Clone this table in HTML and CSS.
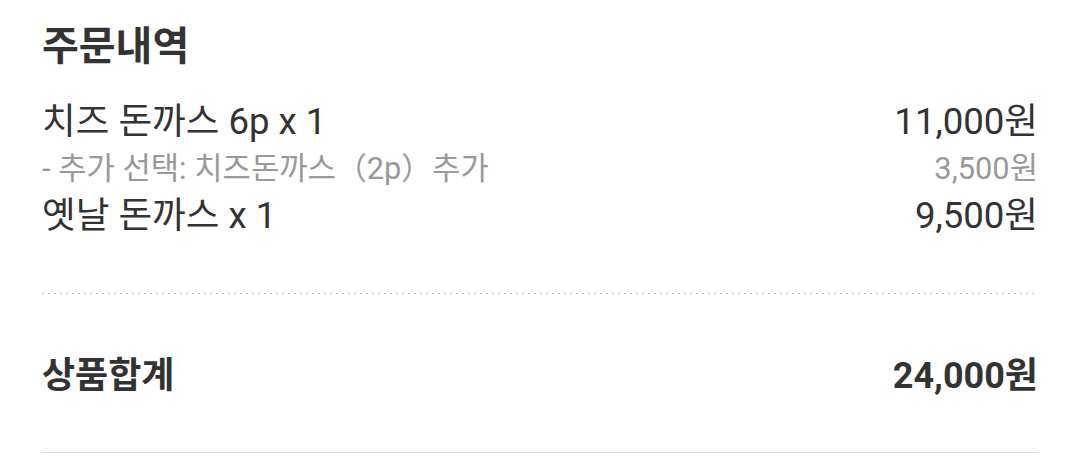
FILE: index.html
```html
<!DOCTYPE html>
<html lang="ko">
<head>
<meta charset="utf-8">
<link rel="stylesheet" href="styles.css">
</head>
<body>
<section class="order">
  <h2 class="order-title">주문내역</h2>
  <ul class="order-list">
    <li class="order-row">
      <span class="order-name">치즈 돈까스 6p x 1</span>
      <span class="order-price">11,000원</span>
    </li>
    <li class="order-row order-row--option">
      <span class="order-name">- 추가 선택: 치즈돈까스（2p）추가</span>
      <span class="order-price">3,500원</span>
    </li>
    <li class="order-row">
      <span class="order-name">옛날 돈까스 x 1</span>
      <span class="order-price">9,500원</span>
    </li>
  </ul>
  <div class="divider-dotted"></div>
  <div class="order-total">
    <span class="total-label">상품합계</span>
    <span class="total-price">24,000원</span>
  </div>
  <div class="divider-solid"></div>
</section>
</body>
</html>
```
FILE: styles.css
```css
html, body {
  margin: 0;
  padding: 0;
  background: #ffffff;
}
body {
  font-family: Roboto, "Noto Sans CJK KR", sans-serif;
  color: #333333;
}
.order {
  padding: 0 42px;
}
.order-title {
  margin: 0;
  padding-top: 22px;
  height: 50px;
  line-height: 50px;
  font-size: 40px;
  font-weight: 700;
  color: #333333;
}
.order-list {
  list-style: none;
  margin: 26px 0 0;
  padding: 0;
}
.order-row {
  display: flex;
  justify-content: space-between;
  align-items: center;
  height: 48px;
  line-height: 48px;
  font-size: 36.6px;
  color: #333333;
}
.order-row--option {
  height: 46px;
  line-height: 46px;
  font-size: 30.8px;
  color: #999999;
}
.divider-dotted {
  margin-top: 53px;
  height: 1px;
  background-image: linear-gradient(to right, #c4c4c4 0 2px, transparent 2px 6px);
  background-size: 6px 1px;
  background-repeat: repeat-x;
}
.order-total {
  display: flex;
  justify-content: space-between;
  align-items: center;
  margin-top: 52px;
  height: 60px;
  line-height: 60px;
  font-size: 36px;
  font-weight: 700;
  color: #333333;
}
.divider-solid {
  margin-top: 46px;
  height: 1px;
  background: #dddddd;
}
```
